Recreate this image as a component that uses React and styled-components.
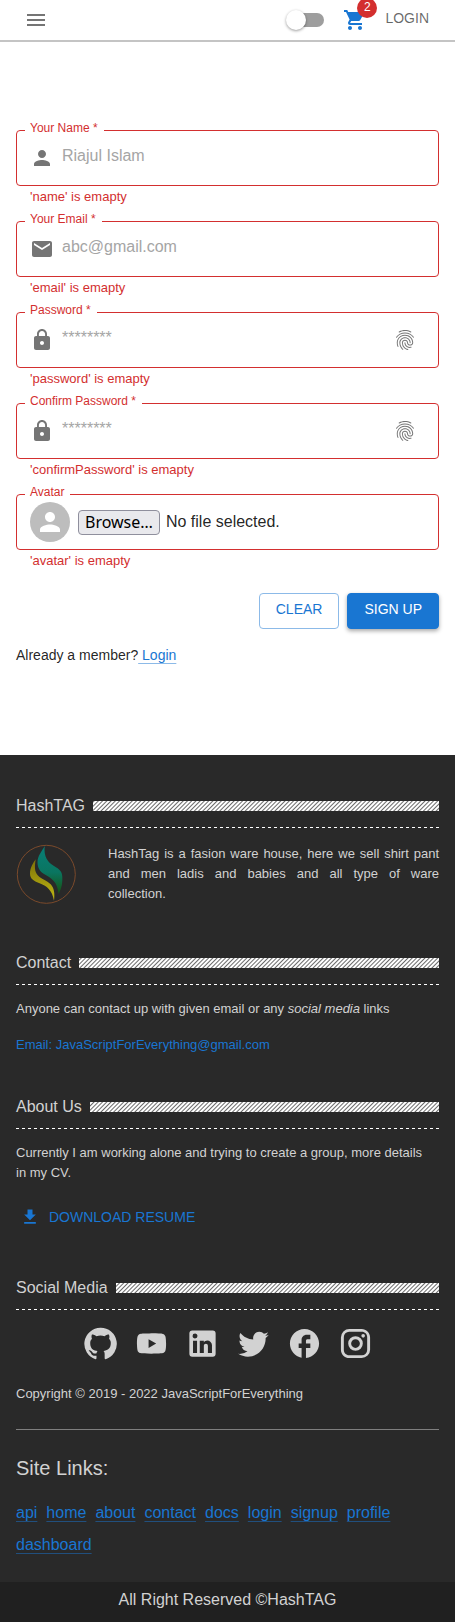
import React, { useRef, useState } from "react";
import styled, { createGlobalStyle } from "styled-components";
import { MdMenu, MdShoppingCart, MdPerson, MdEmail, MdLock, MdFingerprint, MdFileDownload } from "react-icons/md";

const GlobalStyle = createGlobalStyle`
  *, *::before, *::after { box-sizing: border-box; }
  body {
    margin: 0;
    background: #fff;
    color: rgba(0, 0, 0, 0.87);
    font-family: "Liberation Sans", Helvetica, Arial, sans-serif;
    font-size: 16px;
    line-height: 24px;
  }
  button, input { font: inherit; color: inherit; }
  h2, h3, p { margin: 0; font-weight: 400; }
`;

const blue = "#1976d2";
const red = "#d32f2f";

/* Top bar */
const TopBar = styled.header`
  display: flex;
  align-items: center;
  height: 42px;
  padding: 0 26px 0 24px;
  border-bottom: 2px solid #c4c4c4;
  color: rgba(0, 0, 0, 0.54);
`;
const PlainButton = styled.button`
  display: flex;
  padding: 0;
  border: 0;
  background: none;
  cursor: pointer;
`;
const Tools = styled.div`
  display: flex;
  align-items: center;
  margin-left: auto;
`;
const Switch = styled.input`
  appearance: none;
  display: flex;
  align-items: center;
  width: 34px;
  height: 14px;
  margin: 0 19px 0 0;
  border-radius: 7px;
  background: #9e9e9e;
  cursor: pointer;
  &::before {
    content: "";
    flex: none;
    width: 20px;
    height: 20px;
    margin-left: -4px;
    border-radius: 50%;
    background: #fff;
    box-shadow: 0 1px 3px rgba(0, 0, 0, 0.4);
  }
  &:checked { background: #8bbae8; }
  &:checked::before { margin-left: 18px; background: ${blue}; }
`;
const CartButton = styled(PlainButton)`
  position: relative;
  margin-right: 18px;
  color: ${blue};
`;
const Badge = styled.span`
  position: absolute;
  top: -10px;
  right: -10px;
  width: 20px;
  height: 20px;
  border-radius: 10px;
  background: ${red};
  color: #fff;
  font-size: 12px;
  line-height: 18px;
  text-align: center;
`;
const LoginLink = styled.a`
  padding-bottom: 4px;
  color: rgba(0, 0, 0, 0.6);
  font-size: 14px;
  line-height: 20px;
  text-decoration: none;
`;

/* Form */
const Form = styled.form`
  display: flex;
  flex-direction: column;
  gap: 12px;
  padding: 88px 16px 90px;
`;
const FieldRoot = styled.div`
  position: relative;
  color: ${red};
`;
const FieldLabel = styled.label`
  position: absolute;
  top: -10px;
  left: 9px;
  padding: 0 6px 0 5px;
  background: #fff;
  font-size: 12px;
  line-height: 16px;
`;
const FieldBox = styled.div`
  display: flex;
  align-items: center;
  gap: 8px;
  height: 56px;
  padding: 0 13px;
  border: 1px solid ${red};
  border-radius: 4px;
  color: rgba(0, 0, 0, 0.54);
`;
const TextInput = styled.input`
  flex: 1;
  min-width: 0;
  height: 24px;
  padding: 0 0 4px;
  border: 0;
  outline: 0;
  background: none;
  color: rgba(0, 0, 0, 0.87);
  &::placeholder { color: #a5a5a5; opacity: 1; }
`;
const RevealButton = styled(PlainButton)`
  padding: 8px;
`;
const HelperText = styled.p`
  padding: 3px 14px 4px;
  font-size: 13px;
  line-height: 16px;
`;
const AvatarCircle = styled.span`
  display: flex;
  align-items: center;
  justify-content: center;
  width: 40px;
  height: 40px;
  border-radius: 50%;
  background: #bdbdbd;
  color: #fff;
`;
const FilePicker = styled.div`
  display: flex;
  align-items: center;
  gap: 6px;
  color: rgba(0, 0, 0, 0.87);
`;
const HiddenFile = styled.input`
  position: absolute;
  width: 1px;
  height: 1px;
  opacity: 0;
`;
const BrowseButton = styled.button`
  height: 25px;
  padding: 0 6px;
  border: 1px solid #8f8f9d;
  border-radius: 4px;
  background: #e9e9ed;
  color: #000;
  font-family: "Noto Sans", sans-serif;
  line-height: 22px;
`;
const Actions = styled.div`
  display: flex;
  justify-content: flex-end;
  gap: 8px;
  padding-top: 8px;
`;
const ActionButton = styled.button`
  height: 36px;
  padding: 0 16px 4px;
  border: 1px solid ${(p) => (p.$filled ? blue : "#8cbae8")};
  border-radius: 4px;
  background: ${(p) => (p.$filled ? blue : "#fff")};
  color: ${(p) => (p.$filled ? "#fff" : blue)};
  box-shadow: ${(p) => (p.$filled ? "0 2px 4px rgba(0, 0, 0, 0.35)" : "none")};
  font-size: 14px;
  cursor: pointer;
`;
const MemberNote = styled.p`
  padding-top: 4px;
  font-size: 14px;
  line-height: 20px;
`;
const TextLink = styled.a`
  color: ${blue};
  text-decoration: underline;
  text-decoration-color: rgba(25, 118, 210, 0.5);
  text-decoration-thickness: 1px;
  text-underline-offset: 3px;
`;

/* Footer */
const Footer = styled.footer`
  background: #292929;
  color: #d2d2d2;
`;
const FooterBody = styled.div`
  padding: 36px 16px 21px;
`;
const Section = styled.section`
  padding-bottom: ${(p) => p.$bottom}px;
`;
const SectionTitle = styled.div`
  display: flex;
  align-items: center;
  gap: 8px;
  height: 37px;
  padding-bottom: 7px;
  background: repeating-linear-gradient(90deg, #fff 0 3px, transparent 3px 6px) bottom / 100% 1px no-repeat;
`;
const TitleText = styled.h2`
  font-size: 16px;
  line-height: 24px;
`;
const Hatch = styled.span`
  flex: 1;
  height: 10px;
  background: repeating-linear-gradient(-45deg, #fff 0 1px, #6a6a6a 2px, #fff 3px);
`;
const SmallText = styled.p`
  flex: 1;
  padding-top: ${(p) => p.$top || 0}px;
  font-size: 13px;
  line-height: 20px;
`;
const JustifiedLine = styled.span`
  display: block;
  text-align: justify;
  text-align-last: justify;
`;
const Brand = styled.div`
  display: flex;
  gap: 32px;
  padding-top: 16px;
`;
const Logo = styled.svg`
  flex: none;
  width: 60px;
  height: 60px;
`;
const MailLink = styled.a`
  color: ${blue};
  text-decoration: none;
`;
const DownloadLink = styled.a`
  display: flex;
  align-items: center;
  gap: 9px;
  padding: 22px 4px 0;
  color: ${blue};
  font-size: 14px;
  text-decoration: none;
`;
const SocialRow = styled.nav`
  display: flex;
  justify-content: center;
  padding-top: 8px;
`;
const SocialLink = styled.a`
  display: flex;
  padding: 8px;
  color: inherit;
  & svg { width: 35px; height: 35px; fill: currentColor; }
`;
const Divider = styled.hr`
  margin: 0;
  border: 0;
  border-top: 1px solid #7f7f7f;
`;
const LinksTitle = styled.h3`
  padding: 22px 0 13px;
  font-size: 20px;
  line-height: 32px;
`;
const LinkList = styled.nav`
  display: flex;
  flex-wrap: wrap;
  column-gap: 9px;
  line-height: 32px;
`;
const Rights = styled.div`
  height: 40px;
  background: #202020;
  line-height: 36px;
  text-align: center;
`;

const social = [
  ["GitHub", "M12 1.27a11 11 0 00-3.48 21.46c.55.09.73-.28.73-.55v-1.84c-3.03.64-3.67-1.46-3.67-1.46-.55-1.29-1.28-1.65-1.28-1.65-.92-.65.1-.65.1-.65 1.1 0 1.73 1.1 1.73 1.1.92 1.65 2.57 1.2 3.21.92a2 2 0 01.64-1.47c-2.47-.27-5.04-1.19-5.04-5.5 0-1.1.46-2.1 1.2-2.84a3.76 3.76 0 010-2.93s.91-.28 3.11 1.1c1.8-.49 3.7-.49 5.5 0 2.1-1.38 3.02-1.1 3.02-1.1a3.76 3.76 0 01.1 2.93c.83.74 1.2 1.74 1.2 2.94 0 4.21-2.57 5.13-5.04 5.4.45.37.82.92.82 2.02v3.03c0 .27.1.64.73.55A11 11 0 0012 1.27"],
  ["YouTube", "M10 15l5.19-3L10 9v6m11.56-7.83c.13.47.22 1.1.28 1.9.07.8.1 1.49.1 2.09L22 12c0 2.19-.16 3.8-.44 4.83-.25.9-.83 1.48-1.73 1.73-.47.13-1.33.22-2.65.28-1.3.07-2.49.1-3.59.1L12 19c-4.19 0-6.8-.16-7.83-.44-.9-.25-1.48-.83-1.73-1.73-.13-.47-.22-1.1-.28-1.9-.07-.8-.1-1.49-.1-2.09L2 12c0-2.19.16-3.8.44-4.83.25-.9.83-1.48 1.73-1.73.47-.13 1.33-.22 2.65-.28 1.3-.07 2.49-.1 3.59-.1L12 5c4.19 0 6.8.16 7.83.44.9.25 1.48.83 1.73 1.73z"],
  ["LinkedIn", "M19 3a2 2 0 0 1 2 2v14a2 2 0 0 1-2 2H5a2 2 0 0 1-2-2V5a2 2 0 0 1 2-2h14m-.5 15.5v-5.3a3.26 3.26 0 0 0-3.26-3.26c-.85 0-1.84.52-2.32 1.3v-1.11h-2.79v8.37h2.79v-4.93c0-.77.62-1.4 1.39-1.4a1.4 1.4 0 0 1 1.4 1.4v4.93h2.79M6.88 8.56a1.68 1.68 0 0 0 1.68-1.68c0-.93-.75-1.69-1.68-1.69a1.69 1.69 0 0 0-1.69 1.69c0 .93.76 1.68 1.69 1.68m1.39 9.94v-8.37H5.5v8.37h2.77z"],
  ["Twitter", "M22.46 6c-.77.35-1.6.58-2.46.69.88-.53 1.56-1.37 1.88-2.38-.83.5-1.75.85-2.72 1.05C18.37 4.5 17.26 4 16 4c-2.35 0-4.27 1.92-4.27 4.29 0 .34.04.67.11.98C8.28 9.09 5.11 7.38 3 4.79c-.37.63-.58 1.37-.58 2.15 0 1.49.75 2.81 1.91 3.56-.71 0-1.37-.2-1.95-.5v.03c0 2.08 1.48 3.82 3.44 4.21a4.22 4.22 0 0 1-1.93.07 4.28 4.28 0 0 0 4 2.98 8.521 8.521 0 0 1-5.33 1.84c-.34 0-.68-.02-1.02-.06C3.44 20.29 5.7 21 8.12 21 16 21 20.33 14.46 20.33 8.79c0-.19 0-.37-.01-.56.84-.6 1.56-1.36 2.14-2.23z"],
  ["Facebook", "M22 12c0-5.52-4.48-10-10-10S2 6.48 2 12c0 4.84 3.44 8.87 8 9.8V15H8v-3h2V9.5C10 7.57 11.57 6 13.5 6H16v3h-2c-.55 0-1 .45-1 1v2h3v3h-3v6.95c5.05-.5 9-4.76 9-9.95z"],
  ["Instagram", "M7.8 2h8.4C19.4 2 22 4.6 22 7.8v8.4a5.8 5.8 0 0 1-5.8 5.8H7.8C4.6 22 2 19.4 2 16.2V7.8A5.8 5.8 0 0 1 7.8 2m-.2 2A3.6 3.6 0 0 0 4 7.6v8.8C4 18.39 5.61 20 7.6 20h8.8a3.6 3.6 0 0 0 3.6-3.6V7.6C20 5.61 18.39 4 16.4 4H7.6m9.65 1.5a1.25 1.25 0 0 1 1.25 1.25A1.25 1.25 0 0 1 17.25 8 1.25 1.25 0 0 1 16 6.75a1.25 1.25 0 0 1 1.25-1.25M12 7a5 5 0 0 1 5 5 5 5 0 0 1-5 5 5 5 0 0 1-5-5 5 5 0 0 1 5-5m0 2a3 3 0 0 0-3 3 3 3 0 0 0 3 3 3 3 0 0 0 3-3 3 3 0 0 0-3-3z"],
];
const links = ["api", "home", "about", "contact", "docs", "login", "signup", "profile", "dashboard"];

function Field({ id, label, icon: Icon, type = "text", placeholder }) {
  const [visible, setVisible] = useState(false);
  const secret = type === "password";
  return (
    <FieldRoot>
      <FieldBox>
        <Icon size={24} />
        <TextInput id={id} type={secret && visible ? "text" : type} placeholder={placeholder} />
        {secret && (
          <RevealButton type="button" aria-label={"Show " + label} onClick={() => setVisible(!visible)}>
            <MdFingerprint size={24} />
          </RevealButton>
        )}
      </FieldBox>
      <FieldLabel htmlFor={id}>{label} *</FieldLabel>
      <HelperText>'{id}' is emapty</HelperText>
    </FieldRoot>
  );
}

function AvatarField() {
  const file = useRef(null);
  return (
    <FieldRoot>
      <FieldBox>
        <AvatarCircle><MdPerson size={30} /></AvatarCircle>
        <FilePicker>
          <HiddenFile ref={file} id="avatar" type="file" tabIndex={-1} />
          <BrowseButton type="button" onClick={() => file.current.click()}>Browse…</BrowseButton>
          <span>No file selected.</span>
        </FilePicker>
      </FieldBox>
      <FieldLabel htmlFor="avatar">Avatar</FieldLabel>
      <HelperText>'avatar' is emapty</HelperText>
    </FieldRoot>
  );
}

function FooterSection({ title, bottom, children }) {
  return (
    <Section $bottom={bottom}>
      <SectionTitle><TitleText>{title}</TitleText><Hatch /></SectionTitle>
      {children}
    </Section>
  );
}

function FlameLogo() {
  return (
    <Logo viewBox="0 0 60 60" role="img" aria-label="HashTag logo">
      <defs>
        <linearGradient id="leaf" x1="0" y1="0" x2="0" y2="1">
          <stop offset="0" stopColor="#087e77" />
          <stop offset="0.55" stopColor="#0a7560" />
          <stop offset="1" stopColor="#17520f" />
        </linearGradient>
        <linearGradient id="gold" x1="0" y1="0" x2="0" y2="1">
          <stop offset="0" stopColor="#7c7008" />
          <stop offset="1" stopColor="#c0b914" />
        </linearGradient>
      </defs>
      <circle cx="30.300" cy="30.300" r="29" fill="none" stroke="#7b4a2b" />
      <path fill="url(#leaf)" d="M28.700 2C26 7 21.500 12 21.500 18C21.500 24 24 27.500 28 30C35 34 41.500 37 42.500 50C46 44 46.500 38 46.300 33C46.300 28 43.500 25 38 22C32 18.500 27.500 13 28.700 2Z" />
      <path fill="url(#gold)" d="M19.700 15.300C17 19 14 24 14 29.500C14 35 18 37 23 39C31 42 36 46 38 56.700C39 49 38 44 34.700 40.300C31 36.500 27 35.500 23.500 33C19 29.500 18 25 19.700 15.300Z" />
    </Logo>
  );
}

export default function App() {
  return (
    <>
      <GlobalStyle />
      <TopBar>
        <PlainButton aria-label="Open menu"><MdMenu size={24} /></PlainButton>
        <Tools>
          <Switch type="checkbox" role="switch" aria-label="Dark mode" />
          <CartButton aria-label="Shopping cart"><MdShoppingCart size={24} /><Badge>2</Badge></CartButton>
          <LoginLink href="#login">LOGIN</LoginLink>
        </Tools>
      </TopBar>
      <main>
        <Form noValidate onSubmit={(e) => e.preventDefault()}>
          <Field id="name" label="Your Name" icon={MdPerson} placeholder="Riajul Islam" />
          <Field id="email" label="Your Email" type="email" icon={MdEmail} placeholder="abc@gmail.com" />
          <Field id="password" label="Password" type="password" icon={MdLock} placeholder="********" />
          <Field id="confirmPassword" label="Confirm Password" type="password" icon={MdLock} placeholder="********" />
          <AvatarField />
          <Actions>
            <ActionButton type="reset">CLEAR</ActionButton>
            <ActionButton type="submit" $filled>SIGN UP</ActionButton>
          </Actions>
          <MemberNote>Already a member?<TextLink href="#login"> Login</TextLink></MemberNote>
        </Form>
      </main>
      <Footer>
        <FooterBody>
          <FooterSection title="HashTAG" bottom={44}>
            <Brand>
              <FlameLogo />
              <SmallText>
                <JustifiedLine>HashTag is a fasion ware house, here we sell shirt pant</JustifiedLine>{" "}
                <JustifiedLine>and men ladis and babies and all type of ware</JustifiedLine>{" "}
                collection.
              </SmallText>
            </Brand>
          </FooterSection>
          <FooterSection title="Contact" bottom={37}>
            <SmallText $top={14}>Anyone can contact up with given email or any <em>social media</em> links</SmallText>
            <SmallText $top={16}><MailLink href="mailto:JavaScriptForEverything@gmail.com">Email: JavaScriptForEverything@gmail.com</MailLink></SmallText>
          </FooterSection>
          <FooterSection title="About Us" bottom={44}>
            <SmallText $top={14}>Currently I am working alone and trying to create a group, more details in&nbsp;my&nbsp;CV.</SmallText>
            <DownloadLink href="#resume"><MdFileDownload size={20} />DOWNLOAD RESUME</DownloadLink>
          </FooterSection>
          <FooterSection title="Social Media" bottom={25}>
            <SocialRow aria-label="Social media">
              {social.map(([name, d]) => (
                <SocialLink key={name} href={"#" + name.toLowerCase()} aria-label={name}>
                  <svg viewBox="0 0 24 24"><path d={d} /></svg>
                </SocialLink>
              ))}
            </SocialRow>
            <SmallText $top={15}>Copyright © 2019 - 2022 JavaScriptForEverything</SmallText>
          </FooterSection>
          <Divider />
          <LinksTitle>Site Links:</LinksTitle>
          <LinkList aria-label="Site links">
            {links.map((name) => <TextLink key={name} href={"#" + name}>{name}</TextLink>)}
          </LinkList>
        </FooterBody>
        <Rights>All Right Reserved ©HashTAG</Rights>
      </Footer>
    </>
  );
}
